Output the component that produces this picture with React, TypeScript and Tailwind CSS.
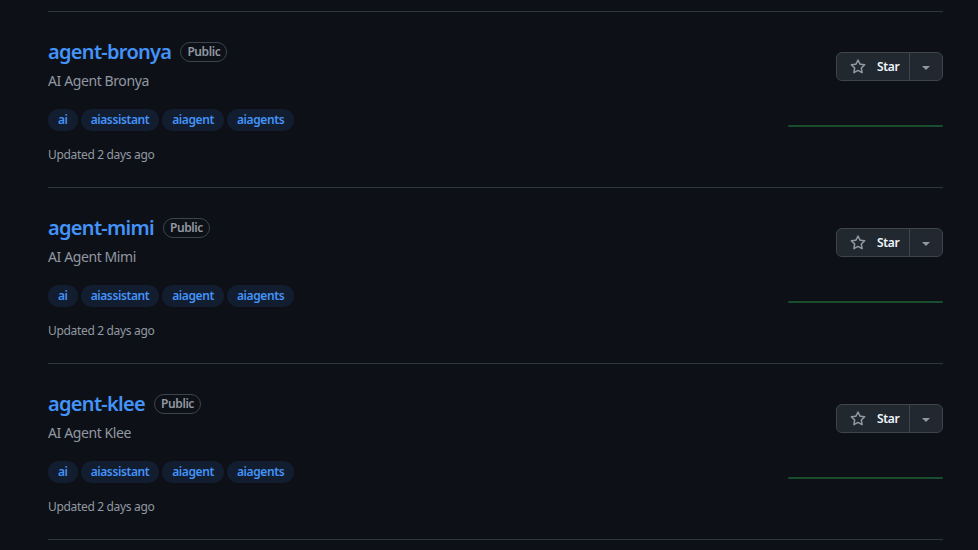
import React from "react";

const repos = [
  { name: "agent-bronya", desc: "AI Agent Bronya" },
  { name: "agent-mimi", desc: "AI Agent Mimi" },
  { name: "agent-klee", desc: "AI Agent Klee" },
];

const topics = ["ai", "aiassistant", "aiagent", "aiagents"];

function StarIcon() {
  return (
    <svg width="16" height="16" viewBox="0 0 16 16" fill="#9198a1">
      <path d="M8 .25a.75.75 0 0 1 .673.418l1.882 3.815 4.21.612a.75.75 0 0 1 .416 1.279l-3.046 2.97.719 4.192a.751.751 0 0 1-1.088.791L8 12.347l-3.766 1.98a.75.75 0 0 1-1.088-.79l.72-4.194L.818 6.374a.75.75 0 0 1 .416-1.28l4.21-.611L7.327.668A.75.75 0 0 1 8 .25Zm0 2.445L6.615 5.5a.75.75 0 0 1-.564.41l-3.097.45 2.24 2.184a.75.75 0 0 1 .216.664l-.528 3.084 2.769-1.456a.75.75 0 0 1 .698 0l2.77 1.456-.53-3.084a.75.75 0 0 1 .216-.664l2.24-2.183-3.096-.45a.75.75 0 0 1-.564-.41L8 2.694Z" />
    </svg>
  );
}

function Caret() {
  return (
    <svg width="16" height="16" viewBox="0 0 16 16" fill="#9198a1">
      <path d="m4.427 7.427 3.396 3.396a.25.25 0 0 0 .354 0l3.396-3.396A.25.25 0 0 0 11.396 7H4.604a.25.25 0 0 0-.177.427Z" />
    </svg>
  );
}

function Row({ name, desc }: { name: string; desc: string }) {
  return (
    <div className="flex border-b border-[#30363d] pt-[25px] pb-[23px]">
      <div className="flex-1 flex flex-col">
        <div className="flex items-center h-[30px] mb-[3px]">
          <span className="text-[20px] leading-[30px] font-semibold tracking-[-0.7px] text-[#4493f8]">{name}</span>
          <span className="ml-[9px] h-[20px] px-[6px] rounded-full border border-[#3d444d] text-[12px] leading-[18px] font-semibold tracking-[-0.4px] text-[#9198a1]">
            Public
          </span>
        </div>
        <div className="text-[14px] leading-[21px] tracking-[-0.4px] text-[#9198a1]">{desc}</div>
        <div className="flex mt-[18px] gap-[3px]">
          {topics.map((t) => (
            <span
              key={t}
              className="h-[22px] px-[10px] rounded-full bg-[#121d2f] text-[#4493f8] text-[12px] leading-[22px] font-semibold tracking-[-0.4px]"
            >
              {t}
            </span>
          ))}
        </div>
        <div className="mt-[15px] text-[12px] leading-[18px] tracking-[-0.33px] text-[#9198a1]">Updated 2 days ago</div>
      </div>
      <div className="w-[155px] flex flex-col items-end">
        <div className="mt-[15px] flex h-[29px] rounded-[6px] border border-[#3d444d] bg-[#212830]">
          <div className="flex items-center w-[73px] pl-[13px] gap-[11px] border-r border-[#3d444d]">
            <StarIcon />
            <span className="text-[12px] font-semibold tracking-[-0.3px] text-[#f0f6fc]">Star</span>
          </div>
          <div className="flex items-center justify-center w-[32px]">
            <Caret />
          </div>
        </div>
        <svg width="155" height="30" className="mt-[16px] block" viewBox="0 0 155 30">
          <path d="M1 29 L154 29" stroke="#1a4d2e" strokeWidth="2" fill="none" strokeLinecap="round" />
        </svg>
      </div>
    </div>
  );
}

export default function App() {
  return (
    <div
      className="w-[978px] h-[550px] bg-[#0d1117] overflow-hidden pt-[11px]"
      style={{ fontFamily: '"Noto Sans", "Open Sans", sans-serif' }}
    >
      <div className="ml-[48px] w-[895px] border-t border-[#30363d]">
        {repos.map((r) => (
          <Row key={r.name} {...r} />
        ))}
      </div>
    </div>
  );
}
